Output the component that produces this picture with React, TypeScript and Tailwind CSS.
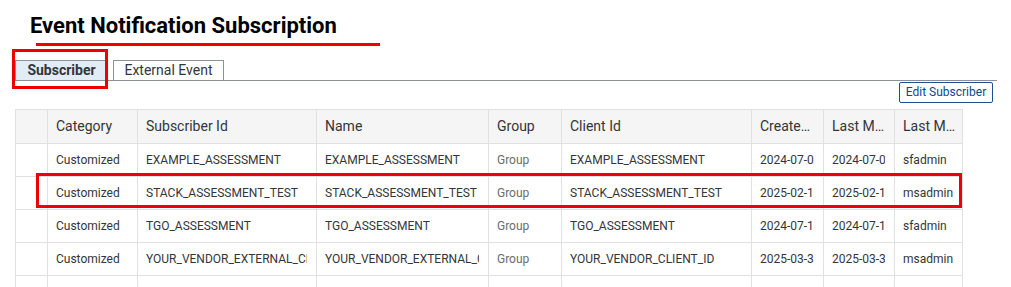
const columns = [
  { label: '', width: 32 },
  { label: 'Category', width: 90 },
  { label: 'Subscriber Id', width: 179 },
  { label: 'Name', width: 172 },
  { label: 'Group', width: 73 },
  { label: 'Client Id', width: 190 },
  { label: 'Created On', width: 72 },
  { label: 'Last Modified On', width: 71 },
  { label: 'Last Modified By', width: 68 },
];

const rows = [
  ['Customized', 'EXAMPLE_ASSESSMENT', 'EXAMPLE_ASSESSMENT', 'Group', 'EXAMPLE_ASSESSMENT', '2024-07-0', '2024-07-0', 'sfadmin'],
  ['Customized', 'STACK_ASSESSMENT_TEST', 'STACK_ASSESSMENT_TEST', 'Group', 'STACK_ASSESSMENT_TEST', '2025-02-1', '2025-02-1', 'msadmin'],
  ['Customized', 'TGO_ASSESSMENT', 'TGO_ASSESSMENT', 'Group', 'TGO_ASSESSMENT', '2024-07-1', '2024-07-1', 'sfadmin'],
  ['Customized', 'YOUR_VENDOR_EXTERNAL_CLIENT_ID', 'YOUR_VENDOR_EXTERNAL_CLIENT_ID', 'Group', 'YOUR_VENDOR_CLIENT_ID', '2025-03-3', '2025-03-3', 'msadmin'],
  ['', '', '', '', '', '', '', ''],
];

export default function App() {
  return (
    <div className="relative w-[1011px] h-[287px] overflow-hidden bg-white text-[#32363a] font-['Roboto',Arial,sans-serif]">
      {/* page header */}
      <div className="pl-[30px] pt-[13px]">
        <h1 className="text-[22px] leading-[25px] font-bold text-black">Event Notification Subscription</h1>
      </div>
      <div className="ml-[36px] mt-[5px] w-[344px] h-[3px] bg-[#ee0000]" />

      {/* tabs */}
      <div className="mt-[14px] ml-[15px] w-[982px] flex items-end">
        <button className="w-[93px] h-[21px] border border-[#89919a] bg-[#e1ecf7] text-[14px] leading-[19px] font-bold text-[#32363a]">
          Subscriber
        </button>
        <div className="w-[5px] h-[21px] border-b border-[#89919a]" />
        <button className="w-[111px] h-[21px] border border-[#89919a] bg-white text-[14px] leading-[19px] text-[#32363a]">
          External Event
        </button>
        <div className="flex-1 h-[21px] border-b border-[#89919a]" />
      </div>

      {/* toolbar */}
      <div className="w-[993px] flex justify-end">
        <button className="mt-px w-[94px] h-[21px] border border-[#1d4f91] rounded-[2px] bg-white text-[12px] leading-[19px] text-[#0a4a92]">
          Edit Subscriber
        </button>
      </div>

      {/* table */}
      <table className="mt-[6px] ml-[15px] w-[947px] table-fixed border-collapse">
        <colgroup>
          {columns.map((c, i) => (
            <col key={i} style={{ width: c.width }} />
          ))}
        </colgroup>
        <thead>
          <tr className="h-[34px] bg-[#f5f5f5]">
            {columns.map((c, i) => (
              <th key={i} className={`border border-[#e1e1e1] pl-2 text-left font-normal text-[14px] ${i === columns.length - 1 ? 'pr-[6px]' : 'pr-[9px]'}`}>
                <div className="truncate">{c.label}</div>
              </th>
            ))}
          </tr>
        </thead>
        <tbody>
          {rows.map((r, ri) => (
            <tr key={ri} className="h-[33px] bg-white">
              <td className="border border-[#e1e1e1]" />
              {r.map((cell, ci) => (
                <td key={ci} className={`border border-[#e1e1e1] pl-2 pr-[9px] text-[12px] ${ci === 3 ? 'text-[#6a6d70]' : 'text-[#32363a]'}`}>
                  <div className="overflow-hidden whitespace-nowrap">{cell}</div>
                </td>
              ))}
            </tr>
          ))}
        </tbody>
      </table>

      {/* annotation boxes */}
      <div className="absolute left-[12px] top-[49px] w-[96px] h-[40px] border-[3px] border-[#ee0000]" />
      <div className="absolute left-[36px] top-[173px] w-[926px] h-[35px] border-[3px] border-[#ee0000]" />
    </div>
  );
}
